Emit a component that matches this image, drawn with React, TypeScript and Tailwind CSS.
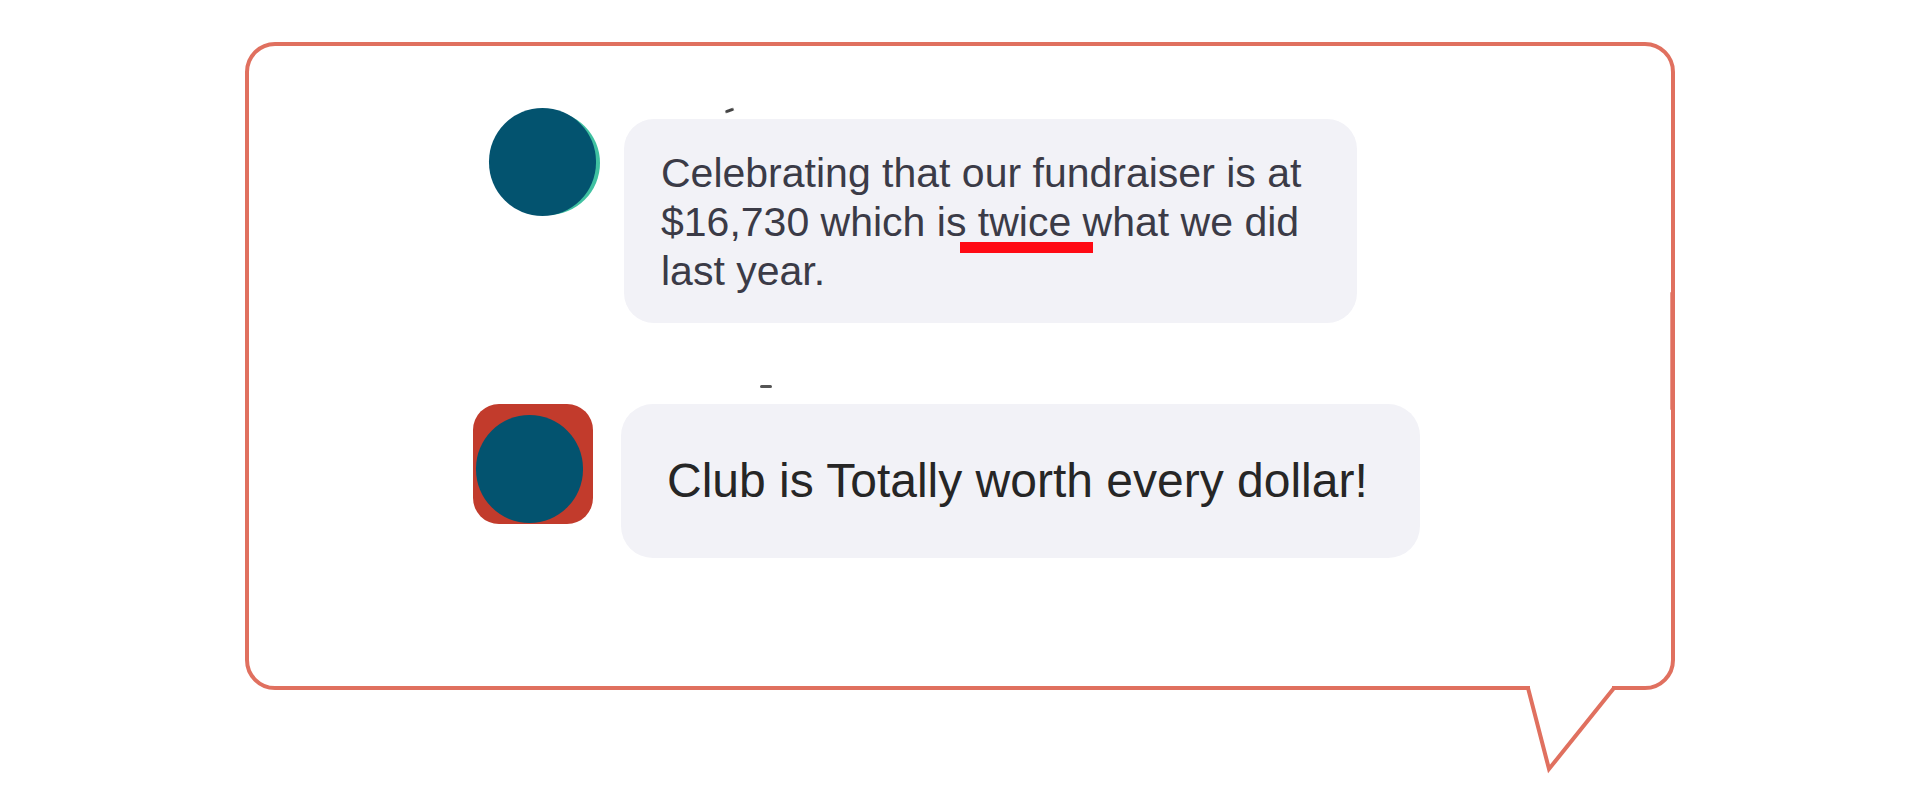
export default function App() {
  return (
    <div className="w-[1920px] h-[800px] bg-white overflow-hidden pt-[42px] pl-[245px] font-['Liberation_Sans',Arial,sans-serif]">
      <div className="relative w-[1430px] h-[648px] border-[4px] border-[#E0705F] rounded-[30px]">
        <div className="flex flex-col pt-[62px]">
          {/* Row 1 */}
          <div className="flex items-start pl-[240px]">
            <div className="relative w-[111px] h-[108px] shrink-0">
              <div className="absolute left-[4px] top-[3px] w-[107px] h-[104px] rounded-full bg-[#3FC1A1]" />
              <div className="absolute left-0 top-0 w-[107px] h-[108px] rounded-full bg-[#03536F]" />
              <div className="absolute left-[236px] top-[1px] w-[9px] h-[3px] rounded-full bg-[#444] rotate-[-20deg] blur-[0.5px]" />
            </div>
            <div className="relative ml-[24px] mt-[11px] w-[733px] h-[204px] shrink-0 rounded-[30px] bg-[#F2F2F7] pl-[37px] pt-[30px] text-[41px] leading-[49px] text-[#3B3B47] whitespace-nowrap">
              <div>Celebrating that our fundraiser is at</div>
              <div>$16,730 which is twice what we did</div>
              <div>last year.</div>
              <div className="absolute left-[336px] top-[123px] w-[133px] h-[11px] bg-[#FF0A14]" />
            </div>
          </div>
          {/* Row 2 */}
          <div className="flex items-start mt-[81px] pl-[224px]">
            <div className="relative w-[120px] h-[120px] shrink-0 rounded-[26px] bg-[#C23B2C]">
              <div className="absolute left-[3px] top-[11px] w-[107px] h-[108px] rounded-full bg-[#03536F]" />
              <div className="absolute left-[287px] top-[-19px] w-[12px] h-[3px] rounded-full bg-[#555] blur-[0.5px]" />
            </div>
            <div className="ml-[28px] w-[799px] h-[154px] shrink-0 rounded-[32px] bg-[#F2F2F7] flex items-center pl-[46px] text-[48px] text-[#262626] whitespace-nowrap">
              Club is Totally worth every dollar!
            </div>
          </div>
        </div>
        {/* right-edge artifact */}
        <div className="absolute right-[-1px] top-[246px] w-[2px] h-[118px] rounded-full bg-[#E0705F] opacity-70" />
        {/* Tail */}
        <svg
          className="absolute left-[1271px] top-[629px]"
          width="110"
          height="100"
          viewBox="0 0 110 100"
        >
          <rect x="10" y="8" width="82" height="10" fill="white" />
          <polyline
            points="8,13 29,94 94,13"
            fill="none"
            stroke="#E0705F"
            strokeWidth="4"
            strokeLinejoin="miter"
          />
        </svg>
      </div>
    </div>
  );
}
